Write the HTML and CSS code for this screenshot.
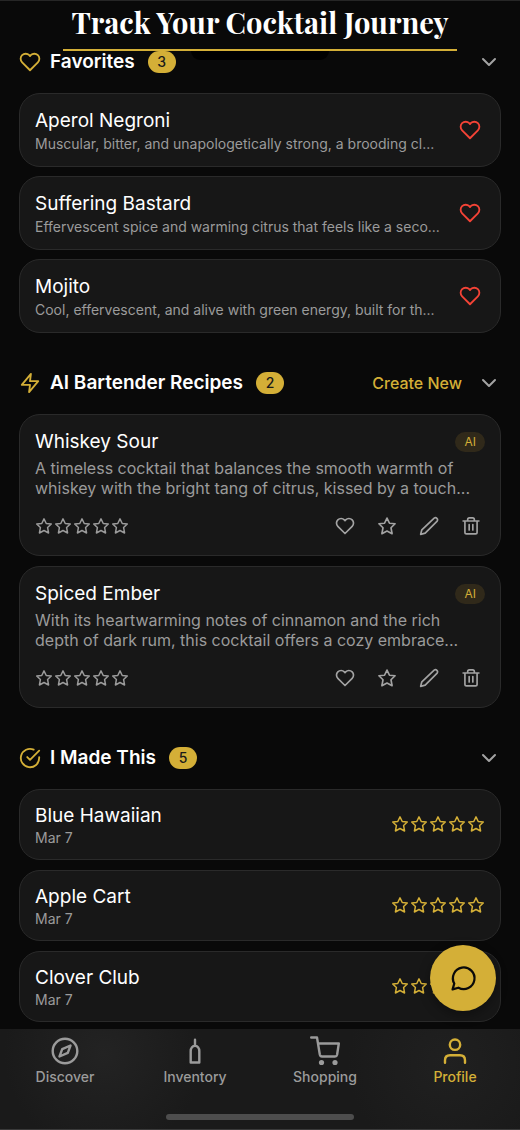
FILE: index.html
```html
<!DOCTYPE html>
<html lang="en">
<head>
<meta charset="utf-8">
<meta name="viewport" content="width=device-width, initial-scale=1">
<title>Track Your Cocktail Journey</title>
<link rel="stylesheet" href="styles.css">
</head>
<body>
<svg class="sprite" aria-hidden="true">
  <symbol id="heart" viewBox="0 0 24 24"><path d="M20.6 4.6a5.5 5.5 0 0 0-7.8 0L12 5.5l-.8-.9a5.5 5.5 0 0 0-7.8 7.8L12 21l8.6-8.6a5.5 5.5 0 0 0 0-7.8z"/></symbol>
  <symbol id="star" viewBox="0 0 24 24"><path d="M12 2.5l3 6.2 6.7.6-4.9 4.8 1.3 7.2L12 18l-6.1 3.3 1.3-7.2-4.9-4.8 6.7-.6z"/></symbol>
  <symbol id="bolt" viewBox="0 0 24 24"><path d="M13 2L3 14h9l-1 8 10-12h-9z"/></symbol>
  <symbol id="check" viewBox="0 0 24 24"><path d="M22 11v1a10 10 0 1 1-6-9.1M22 4L12 14l-3-3"/></symbol>
  <symbol id="chevron" viewBox="0 0 16 16"><path d="M2 5l6 6 6-6"/></symbol>
  <symbol id="pencil" viewBox="0 0 24 24"><path d="M18.2 2.5a2.6 2.6 0 0 1 3.6 3.6L7.4 20.6 2 22l1.4-5.4z"/></symbol>
  <symbol id="trash" viewBox="0 0 24 24"><path d="M2.5 6h19M4.7 6v13.4a2 2 0 0 0 2 2h10.6a2 2 0 0 0 2-2V6M8 6V4.3a2 2 0 0 1 2-2h4a2 2 0 0 1 2 2V6M9.8 10.3v6.4M14.2 10.3v6.4"/></symbol>
  <symbol id="stars" viewBox="0 0 94 18">
    <use href="#star" x="0" width="18" height="18"/><use href="#star" x="19" width="18" height="18"/><use href="#star" x="38" width="18" height="18"/><use href="#star" x="57" width="18" height="18"/><use href="#star" x="76" width="18" height="18"/>
  </symbol>
</svg>

<header class="topbar">
  <h1 class="topbar-title">Track Your Cocktail Journey</h1>
</header>

<main class="content">
  <section class="section">
    <div class="section-head">
      <svg class="section-icon"><use href="#heart"/></svg>
      <h2 class="section-title">Favorites</h2>
      <span class="count">3</span>
      <button class="toggle" aria-label="Collapse favorites"><svg class="chevron"><use href="#chevron"/></svg></button>
    </div>
    <div class="cards">
      <article class="card favorite">
        <div class="card-text"><h3 class="name">Aperol Negroni</h3><p class="tagline">Muscular, bitter, and unapologetically strong, a brooding cl...</p></div>
        <button class="icon-button loved" aria-label="Remove Aperol Negroni"><svg class="love-icon"><use href="#heart"/></svg></button>
      </article>
      <article class="card favorite">
        <div class="card-text"><h3 class="name">Suffering Bastard</h3><p class="tagline">Effervescent spice and warming citrus that feels like a seco...</p></div>
        <button class="icon-button loved" aria-label="Remove Suffering Bastard"><svg class="love-icon"><use href="#heart"/></svg></button>
      </article>
      <article class="card favorite">
        <div class="card-text"><h3 class="name">Mojito</h3><p class="tagline">Cool, effervescent, and alive with green energy, built for th...</p></div>
        <button class="icon-button loved" aria-label="Remove Mojito"><svg class="love-icon"><use href="#heart"/></svg></button>
      </article>
    </div>
  </section>

  <section class="section">
    <div class="section-head">
      <svg class="section-icon"><use href="#bolt"/></svg>
      <h2 class="section-title">AI Bartender Recipes</h2>
      <span class="count">2</span>
      <button class="create">Create New</button>
      <button class="toggle" aria-label="Collapse AI recipes"><svg class="chevron"><use href="#chevron"/></svg></button>
    </div>
    <div class="cards">
      <article class="card recipe">
        <div class="recipe-head"><h3 class="name">Whiskey Sour</h3><span class="tag">AI</span></div>
        <p class="description">A timeless cocktail that balances the smooth warmth of<br>whiskey with the bright tang of citrus, kissed by a touch...</p>
        <div class="recipe-foot">
          <svg class="stars" role="img" aria-label="Not rated"><use href="#stars"/></svg>
          <div class="actions">
            <button class="icon-button" aria-label="Favorite"><svg class="action-icon"><use href="#heart"/></svg></button>
            <button class="icon-button" aria-label="Rate"><svg class="action-icon"><use href="#star"/></svg></button>
            <button class="icon-button" aria-label="Edit"><svg class="action-icon"><use href="#pencil"/></svg></button>
            <button class="icon-button" aria-label="Delete"><svg class="action-icon"><use href="#trash"/></svg></button>
          </div>
        </div>
      </article>
      <article class="card recipe">
        <div class="recipe-head"><h3 class="name">Spiced Ember</h3><span class="tag">AI</span></div>
        <p class="description">With its heartwarming notes of cinnamon and the rich<br>depth of dark rum, this cocktail offers a cozy embrace...</p>
        <div class="recipe-foot">
          <svg class="stars" role="img" aria-label="Not rated"><use href="#stars"/></svg>
          <div class="actions">
            <button class="icon-button" aria-label="Favorite"><svg class="action-icon"><use href="#heart"/></svg></button>
            <button class="icon-button" aria-label="Rate"><svg class="action-icon"><use href="#star"/></svg></button>
            <button class="icon-button" aria-label="Edit"><svg class="action-icon"><use href="#pencil"/></svg></button>
            <button class="icon-button" aria-label="Delete"><svg class="action-icon"><use href="#trash"/></svg></button>
          </div>
        </div>
      </article>
    </div>
  </section>

  <section class="section">
    <div class="section-head">
      <svg class="section-icon"><use href="#check"/></svg>
      <h2 class="section-title">I Made This</h2>
      <span class="count">5</span>
      <button class="toggle" aria-label="Collapse made drinks"><svg class="chevron"><use href="#chevron"/></svg></button>
    </div>
    <div class="cards">
      <article class="card made">
        <div class="card-text"><h3 class="name">Blue Hawaiian</h3><p class="date">Mar 7</p></div>
        <svg class="stars gold" role="img" aria-label="Not rated"><use href="#stars"/></svg>
      </article>
      <article class="card made">
        <div class="card-text"><h3 class="name">Apple Cart</h3><p class="date">Mar 7</p></div>
        <svg class="stars gold" role="img" aria-label="Not rated"><use href="#stars"/></svg>
      </article>
      <article class="card made">
        <div class="card-text"><h3 class="name">Clover Club</h3><p class="date">Mar 7</p></div>
        <svg class="stars gold" role="img" aria-label="Not rated"><use href="#stars"/></svg>
      </article>
    </div>
  </section>
</main>

<button class="chat" aria-label="Chat with the bartender">
  <svg class="chat-icon" viewBox="0 0 24 24"><path d="M7.5 20.2L2.3 21.7l1.5-5.2a9.6 9.6 0 1 1 3.7 3.7z"/></svg>
</button>

<nav class="tabbar">
  <div class="tabs">
    <a class="tab" href="#discover">
      <svg class="tab-icon" viewBox="0 0 30 30"><circle cx="15" cy="15" r="12.3"/><path d="M20.5 9.5l-2.7 7.4-8.3 3.6 2.7-7.4z"/></svg>
      Discover</a>
    <a class="tab" href="#inventory">
      <svg class="tab-icon" viewBox="0 0 30 30"><path d="M15 3.8v6M10.7 26.5V15c0-2.8 2-5.200 4.300-5.200s4.300 2.400 4.300 5.200v11.500z"/></svg>
      Inventory</a>
    <a class="tab" href="#shopping">
      <svg class="tab-icon" viewBox="0 0 30 30"><path d="M1.200 1.500H7L9.800 18.500c.3 1.400 1 2 2.200 2h13c1.200 0 1.800-.6 2.100-1.800L28.800 7.500H8"/><circle class="dot" cx="11.500" cy="26.500" r="2.600"/><circle class="dot" cx="25" cy="26.500" r="2.600"/></svg>
      Shopping</a>
    <a class="tab active" href="#profile" aria-current="page">
      <svg class="tab-icon" viewBox="0 0 30 30"><circle cx="15" cy="8.700" r="5.200"/><path d="M5 26.800v-2.600c0-3 2-5 5-5h10c3 0 5 2 5 5v2.600"/></svg>
      Profile</a>
  </div>
  <div class="home-indicator"></div>
</nav>
</body>
</html>
```

FILE: styles.css
```css
* { box-sizing: border-box; }

:root {
  --gold: #d4af37;
  --grey: #9b9b9b;
}

body {
  margin: 0;
  min-height: 100vh;
  display: flex;
  flex-direction: column;
  background: #090909;
  color: #fff;
  font-family: Inter, Roboto, sans-serif;
}

h1, h2, h3, p { margin: 0; }

button {
  padding: 0;
  border: 0;
  background: none;
  color: inherit;
  font: inherit;
  cursor: pointer;
}

svg {
  display: block;
  flex: none;
  fill: none;
  stroke: currentColor;
  stroke-width: 2;
  stroke-linecap: round;
  stroke-linejoin: round;
}

.sprite {
  position: absolute;
  width: 0;
  height: 0;
}

.topbar {
  position: sticky;
  top: 0;
  z-index: 2;
  display: flex;
  justify-content: center;
  border-top: 1px solid #262626;
  background: #090909;
}

.topbar::after {
  content: "";
  position: absolute;
  top: 100%;
  width: 138px;
  height: 9px;
  border-radius: 0 0 20px 20px;
  background: #000;
}

.topbar-title {
  padding: 0 8px 6px;
  border-bottom: 2px solid var(--gold);
  font: bold 29px/42px "Playfair Display", "Liberation Serif", serif;
}

.content {
  flex: 1;
  display: flex;
  flex-direction: column;
  gap: 39px;
  padding: 0 19px 7px;
}

.section-head {
  display: flex;
  align-items: center;
  height: 22px;
  margin-bottom: 20px;
}

.section-icon {
  width: 22px;
  height: 22px;
  margin-right: 9px;
  color: var(--gold);
}

.section-title {
  font-size: 19px;
  font-weight: 600;
  line-height: 22px;
}

.count {
  min-width: 28px;
  margin-left: 13px;
  border-radius: 11px;
  background: var(--gold);
  color: #1a1a1a;
  font-size: 14px;
  font-weight: 500;
  line-height: 22px;
  text-align: center;
}

.toggle {
  margin-left: auto;
  margin-right: 4px;
  color: #a3a3a3;
}

.create {
  margin-left: auto;
  color: var(--gold);
  font-size: 16px;
  font-weight: 500;
  line-height: 22px;
}

.create + .toggle { margin-left: 19px; }

.chevron {
  width: 16px;
  height: 16px;
}

.cards {
  display: grid;
  gap: 9px;
}

.card {
  min-width: 0;
  border: 1px solid #2a2a2a;
  border-radius: 21px;
  background: #171717;
}

.favorite, .made {
  display: flex;
  align-items: center;
  justify-content: space-between;
}

.favorite { padding: 13px 19px 13px 15px; }
.made { padding: 12px 15px 13px; }
.recipe { padding: 13px 15px 19px; }

.recipe + .recipe, .made + .made { margin-top: 1px; }

.card-text { min-width: 0; }

.name {
  font-size: 19px;
  font-weight: 400;
  line-height: 28px;
}

.tagline {
  overflow: hidden;
  color: var(--grey);
  font-size: 14px;
  line-height: 18px;
  text-overflow: ellipsis;
  white-space: nowrap;
}

.date {
  color: var(--grey);
  font-size: 14px;
  line-height: 16px;
}

.loved { color: #f44336; }

.love-icon {
  width: 22px;
  height: 22px;
}

.recipe-head, .recipe-foot {
  display: flex;
  align-items: center;
  justify-content: space-between;
}

.tag {
  padding: 0 9px;
  border-radius: 10px;
  background: #30291a;
  color: var(--gold);
  font-size: 12px;
  line-height: 20px;
}

.description {
  margin-top: 2px;
  color: var(--grey);
  font-size: 16px;
  line-height: 20px;
}

.recipe-foot { margin-top: 18px; }

.stars {
  width: 94px;
  height: 18px;
  color: var(--grey);
}

.gold { color: var(--gold); }

.actions {
  display: flex;
  gap: 22px;
  margin-right: 4px;
  color: #a3a3a3;
}

.action-icon {
  width: 20px;
  height: 20px;
}

.chat {
  position: fixed;
  right: 24px;
  bottom: 119px;
  z-index: 3;
  display: grid;
  place-items: center;
  width: 66px;
  height: 66px;
  border-radius: 50%;
  background: var(--gold);
  color: #0a0a0a;
  box-shadow: 0 4px 12px rgba(0, 0, 0, 0.35);
}

.chat-icon {
  width: 27px;
  height: 27px;
}

.tabbar {
  position: sticky;
  bottom: 0;
  z-index: 2;
  border-bottom: 1px solid #3a3a3a;
  background:
    radial-gradient(circle at 20% 25%, #232323, transparent 100px),
    radial-gradient(circle at 86% 35%, #202020, transparent 100px),
    #1a1a1a;
}

.tabs {
  display: grid;
  grid-template-columns: repeat(4, 1fr);
  padding-top: 7px;
}

.tab {
  display: flex;
  flex-direction: column;
  align-items: center;
  gap: 2px;
  color: var(--grey);
  font-size: 14px;
  font-weight: 500;
  line-height: 18px;
  text-decoration: none;
}

.tab-icon {
  width: 30px;
  height: 30px;
  stroke-width: 2.4;
}

.active { color: var(--gold); }

.dot {
  fill: currentColor;
  stroke: none;
}

.home-indicator {
  width: 36%;
  height: 6px;
  margin: 28px auto 9px;
  border-radius: 3px;
  background: #4d4d4d;
}
```
